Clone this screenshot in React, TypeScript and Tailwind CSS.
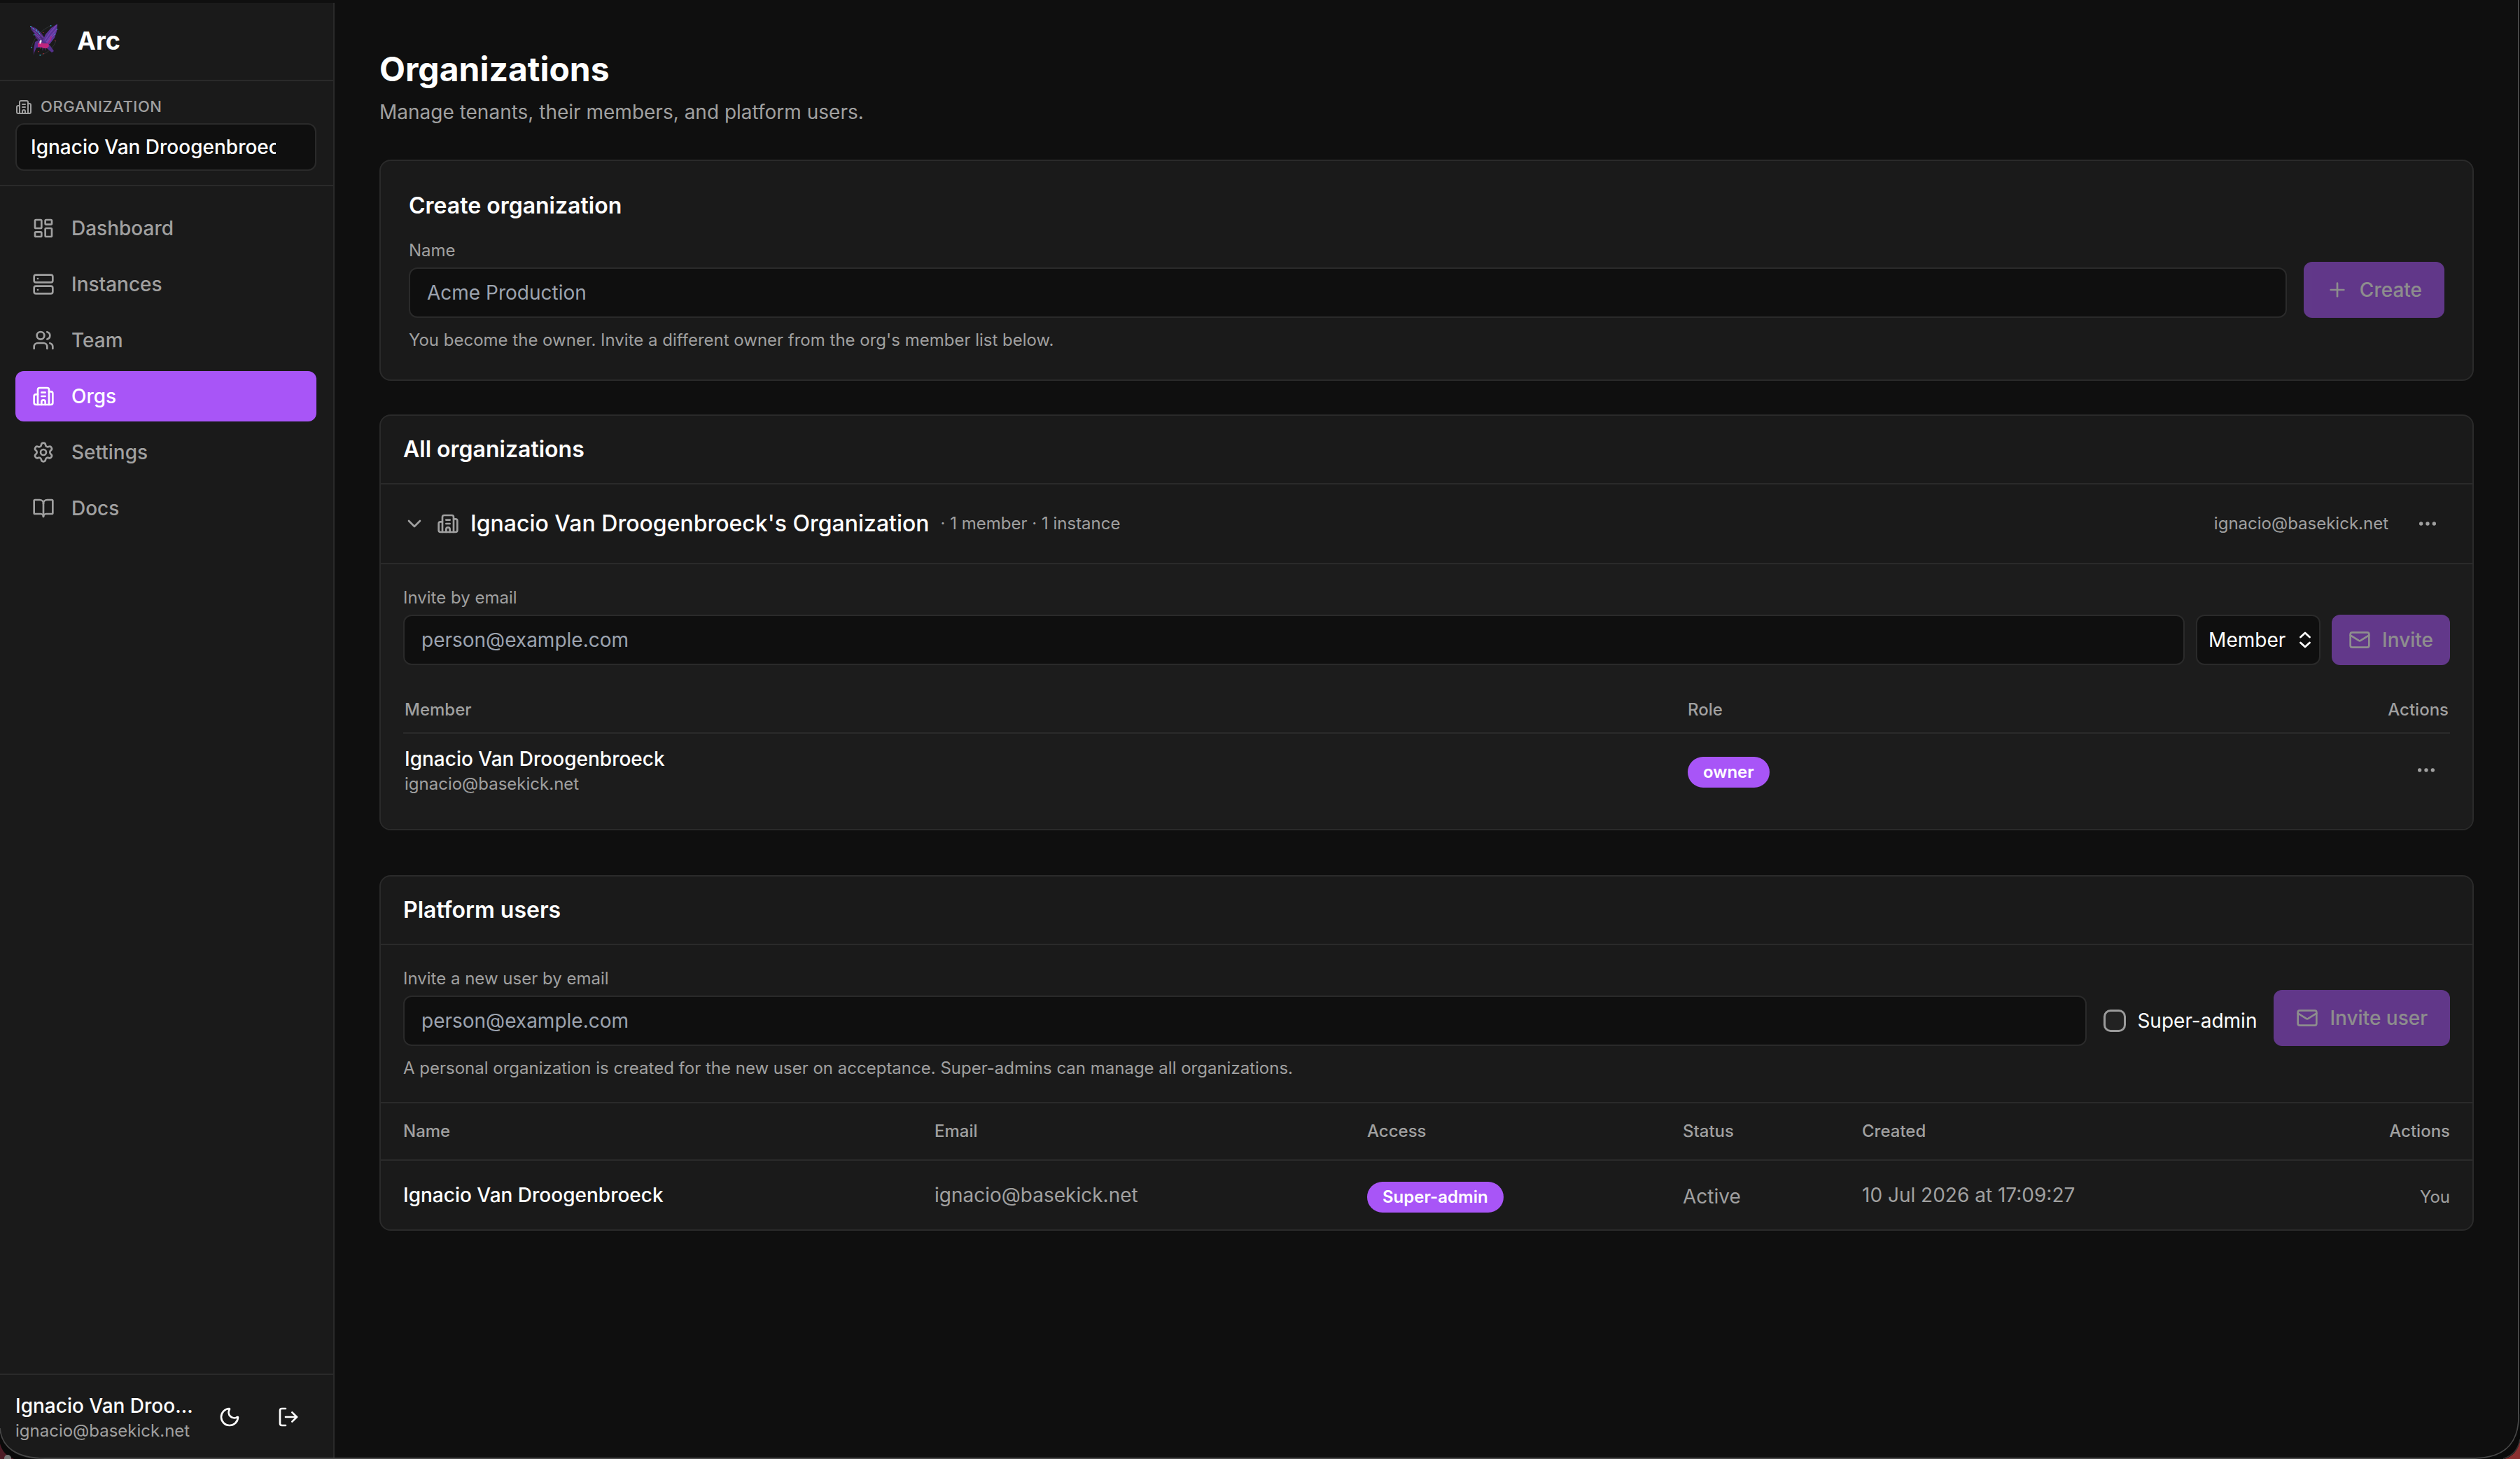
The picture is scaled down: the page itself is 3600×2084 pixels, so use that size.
import type { ReactNode } from 'react'
import {
  BookOpen,
  Building2,
  ChevronDown,
  Ellipsis,
  LayoutDashboard,
  LogOut,
  Mail,
  Moon,
  Plus,
  Server,
  Settings,
  Users,
} from 'lucide-react'

const NAV_ITEMS = [
  { label: 'Dashboard', icon: LayoutDashboard },
  { label: 'Instances', icon: Server },
  { label: 'Team', icon: Users },
  { label: 'Orgs', icon: Building2, active: true },
  { label: 'Settings', icon: Settings },
  { label: 'Docs', icon: BookOpen },
]

const USER = { name: 'Ignacio Van Droogenbroeck', email: 'ignacio@basekick.net' }

/** Hummingbird mark */
function Logo() {
  return (
    <svg viewBox="0 0 48 48" className="mb-1 size-12 shrink-0">
      <path d="M6 35C8 25 16 12 33 4M18 46c10-2 20-11 23-21" fill="none" stroke="#34383c" strokeWidth="0.8" />
      {/* wings */}
      <path d="M4 4l8 3 8 7 4 6 3 8-4 1-5-2-6-6-2-6-4-5z" fill="#4b2a78" />
      <path d="M6 6l8 6 9 9M9 11l9 9M11 16l9 8" stroke="#6d3fa3" strokeWidth="1.4" fill="none" />
      <path d="M43 1l-1 11-3 9-7 9-8 1-2-6 4-9 8-9z" fill="#5b3598" />
      <path d="M42 3l-9 10-8 12M42 9l-8 9-7 9M40 15l-8 8-5 6" stroke="#7a46b5" strokeWidth="1.2" fill="none" />
      {/* body, beak and tail */}
      <path d="M11 27l5-3 7 2 7 3 4 5 4 6-3 2-7-6-8-1-7 0-3 7-1 4 0-8z" fill="#54308a" />
      <path d="M15 28h6l2 1h7l1 4-3 3h-5l-3-2h-5z" fill="#c0267e" />
      <path d="M34 19l-1 5-3 4" stroke="#a3278a" strokeWidth="2" fill="none" />
      <path d="M22 35v4M26 36v3" stroke="#4b2a78" strokeWidth="1" fill="none" />
      <path d="M18.500 24h1.800v3.500h-1.200v2h-1.600V26h1z" fill="#fff" />
      <path d="M4 4h2v1H4zM8 7h1v2H8zM13 9h1v3h-1zM15 11h1v3h-1zM17 14h1v2h-1zM9 16h1.400v1.400H9zM33 3h1.400v1.400H33zM42 8h1v2h-1zM39 15h1v2h-1zM5.500 34h1.400v1.400H5.500zM17.500 45h1.600v1.400h-1.600z" fill="#29a9bf" />
      <path d="M22 13h1.400v1H22zM39 24.500h1.600v1.200H39zM18 35h1.600v1.200H18zM15 40h1.600v1.200H15zM22 43h1.600v1.200H22z" fill="#a52c35" />
    </svg>
  )
}

function Sidebar() {
  return (
    <aside className="flex w-[478px] shrink-0 flex-col border-r-2 border-[#2a2a2a] bg-[#1a1a1a]">
      <div className="flex h-28 shrink-0 items-center gap-[23px] border-b-2 border-[#2a2a2a] pl-[39px]">
        <Logo />
        <span className="pb-0.5 text-4xl font-bold">Arc</span>
      </div>

      {/* Organization switcher */}
      <div className="h-[150px] shrink-0 border-b-2 border-[#2a2a2a] pt-5 pr-6 pl-[22px]">
        <div className="mb-[7px] flex h-[33px] items-center gap-3 text-[22px] font-medium tracking-[0.025em] text-[#a0a0a0] uppercase">
          <Building2 className="size-6" />
          Organization
        </div>
        <div className="flex h-[68px] items-center rounded-xl border-2 border-[#2a2a2a] bg-[#0f0f0f] pr-14 pl-5">
          <div className="overflow-hidden text-[28px]/[40px] font-medium whitespace-nowrap">{USER.name}'s Organization</div>
        </div>
      </div>

      <nav className="flex flex-1 flex-col gap-2 pt-6 pr-6 pl-[22px]">
        {NAV_ITEMS.map(({ label, icon: Icon, active }) => (
          <a
            key={label}
            className={`flex h-[72px] items-center gap-6 rounded-xl px-6 text-[28px]/[40px] font-medium ${
              active ? 'bg-[#a855f7] text-white' : 'text-[#a0a0a0]'
            }`}
          >
            <Icon className="size-8" />
            {label}
          </a>
        ))}
      </nav>

      {/* Signed-in user */}
      <div className="flex h-[122px] shrink-0 items-center border-t-2 border-[#2a2a2a] pl-[22px]">
        <div className="w-[254px]">
          <div className="truncate text-[28px]/[40px] font-medium">{USER.name}</div>
          <div className="text-2xl/[32px] text-[#a0a0a0]">{USER.email}</div>
        </div>
        <Moon className="ml-9 size-8" />
        <LogOut className="ml-[52px] size-8" />
      </div>
    </aside>
  )
}

function Card({ children, className = '' }: { children: ReactNode; className?: string }) {
  return (
    <section className={`overflow-hidden rounded-2xl border-2 border-[#2a2a2a] bg-[#1a1a1a] ${className}`}>
      {children}
    </section>
  )
}

function CardHeader({ children }: { children: ReactNode }) {
  return (
    <div className="border-b-2 border-[#2a2a2a] px-8 py-6">
      <h2 className="text-[32px]/[48px] font-semibold">{children}</h2>
    </div>
  )
}

function Field({ label, placeholder, help }: { label: string; placeholder: string; help?: string }) {
  return (
    <div className="flex-1">
      <label className="mb-2 block text-2xl/[32px] text-[#a0a0a0]">{label}</label>
      <input
        type="text"
        placeholder={placeholder}
        className="block h-[72px] w-full rounded-xl border-2 border-[#2a2a2a] bg-[#0f0f0f] px-6 text-[28px]/[40px] placeholder-[#9ca3af] outline-none"
      />
      {help && <p className="mt-4 text-2xl/[32px] text-[#a0a0a0]">{help}</p>}
    </div>
  )
}

function Badge({ children }: { children: ReactNode }) {
  return (
    <span className="inline-flex h-11 items-center rounded-full bg-[#a855f7] px-[22px] text-2xl/[32px] font-semibold">
      {children}
    </span>
  )
}

function CreateCard() {
  return (
    <Card className="mt-12 p-10">
      <h2 className="mb-6 text-[32px]/[48px] font-semibold">Create organization</h2>
      <div className="flex items-start gap-6">
        <Field
          label="Name"
          placeholder="Acme Production"
          help="You become the owner. Invite a different owner from the org's member list below."
        />
        <button
          disabled
          className="mt-8 flex h-20 items-center gap-4 rounded-xl bg-[#a855f7] px-8 text-[28px]/[40px] font-medium opacity-50"
        >
          <Plus className="size-8" />
          Create
        </button>
      </div>
    </Card>
  )
}

function OrganizationsCard() {
  return (
    <Card className="mt-12">
      <CardHeader>All organizations</CardHeader>

      <div className="flex h-28 items-center gap-4 px-8 text-2xl/[32px] text-[#a0a0a0]">
        <ChevronDown className="size-8" />
        <Building2 className="size-8" />
        <span className="text-[32px]/[48px] font-medium text-white">{USER.name}'s Organization</span>
        <span>· 1 member · 1 instance</span>
        <span className="mr-2 ml-auto">{USER.email}</span>
        <div className="flex size-16 items-center justify-center">
          <Ellipsis className="size-8" />
        </div>
      </div>

      {/* Expanded organization */}
      <div className="border-t-2 border-[#2a2a2a] bg-[#1c1c1c] p-8">
        <div className="flex items-end gap-4">
          <Field label="Invite by email" placeholder="person@example.com" />
          <div className="flex h-[72px] w-[178px] items-center justify-between rounded-xl border-2 border-[#2a2a2a] bg-[#0f0f0f] pr-3 pl-4 text-[28px]/[40px]">
            Member
            <svg viewBox="0 0 16 24" className="h-6 w-4" fill="none" stroke="currentColor" strokeWidth="2.8" strokeLinecap="round" strokeLinejoin="round">
              <path d="M1.500 8L8 2l6.500 6M1.500 16L8 22l6.500-6" />
            </svg>
          </div>
          <button
            disabled
            className="flex h-[72px] items-center gap-4 rounded-xl bg-[#a855f7] px-6 text-[28px]/[40px] font-medium opacity-50"
          >
            <Mail className="size-8" />
            Invite
          </button>
        </div>

        <div className="mt-8 grid grid-cols-[1833px_1fr_auto] border-b-2 border-[#2a2a2a] px-0.5 py-4 text-2xl/[32px] font-medium text-[#a0a0a0]">
          <span>Member</span>
          <span>Role</span>
          <span>Actions</span>
        </div>
        <div className="grid h-[104px] grid-cols-[1833px_1fr_auto] items-center px-0.5">
          <div>
            <div className="text-[28px]/[40px] font-medium">{USER.name}</div>
            <div className="text-2xl/[32px] text-[#a0a0a0]">{USER.email}</div>
          </div>
          <div className="pt-1.5 leading-none">
            <Badge>owner</Badge>
          </div>
          <div className="flex size-16 items-center justify-center text-[#a0a0a0]">
            <Ellipsis className="size-8" />
          </div>
        </div>
      </div>
    </Card>
  )
}

function UsersCard() {
  return (
    <Card className="mt-16">
      <CardHeader>Platform users</CardHeader>

      <div className="flex items-start gap-6 p-8">
        <Field
          label="Invite a new user by email"
          placeholder="person@example.com"
          help="A personal organization is created for the new user on acceptance. Super-admins can manage all organizations."
        />
        <label className="mt-10 flex h-[72px] items-center gap-4 text-[28px]/[40px]">
          <span className="size-8 rounded-[10px] border-[3px] border-[#9b9b9b] bg-[#222222]" />
          Super-admin
        </label>
        <button
          disabled
          className="mt-8 flex h-20 items-center gap-4 rounded-xl bg-[#a855f7] px-8 text-[28px]/[40px] font-medium opacity-50"
        >
          <Mail className="size-8" />
          Invite user
        </button>
      </div>

      <div className="grid grid-cols-[759px_618px_451px_256px_1fr] border-y-2 border-[#2a2a2a] px-8 py-6 text-2xl/[32px] font-medium text-[#a0a0a0]">
        <span>Name</span>
        <span>Email</span>
        <span>Access</span>
        <span>Status</span>
        <div className="flex justify-between">
          <span>Created</span>
          <span>Actions</span>
        </div>
      </div>
      <div className="grid h-[98px] grid-cols-[759px_618px_451px_256px_1fr] items-center px-8 text-[28px]/[40px] text-[#a0a0a0]">
        <span className="font-medium text-white">{USER.name}</span>
        <span>{USER.email}</span>
        <div className="pt-1.5 leading-none text-white">
          <Badge>Super-admin</Badge>
        </div>
        <span className="pt-1">Active</span>
        <div className="flex items-center justify-between">
          <span>10 Jul 2026 at 17:09:27</span>
          <span className="pt-1.5 text-2xl/[32px]">You</span>
        </div>
      </div>
    </Card>
  )
}

/** Rounded window edge and the sliver of desktop behind its lower corners */
function WindowFrame() {
  return (
    <div className="pointer-events-none absolute inset-0">
      <div className="absolute top-0 right-0 bottom-16 w-[3px] border-l-2 border-[#484848] bg-black" />
      <div className="absolute right-16 bottom-0 left-16 h-0.5 bg-[#484848]" />
      <svg viewBox="0 0 64 64" className="absolute bottom-0 left-0 size-16">
        <path d="M0 20C2 45 20 62 52 64H0z" fill="#0a0a0a" />
        <path d="M0 42Q4 58 20 64H0z" fill="#4e1c26" />
        <circle cx="11" cy="63" r="5" fill="#777" />
        <path d="M0 20C2 46 22 63 64 63" fill="none" stroke="#484848" strokeWidth="1.8" />
      </svg>
      <svg viewBox="0 0 64 64" className="absolute right-0 bottom-0 size-16">
        <path d="M62 0C62 42 46 60 6 64H64V0z" fill="#0a0a0a" />
        <path d="M64 38Q60 58 42 64H64z" fill="#8a3030" />
        <path d="M64 36Q60 58 40 63.500" fill="none" stroke="#333" strokeWidth="1.500" />
        <path d="M62 0V8C60 42 42 62 0 63" fill="none" stroke="#484848" strokeWidth="1.8" />
      </svg>
    </div>
  )
}

export default function App() {
  return (
    <div className="relative flex h-[2084px] w-[3600px] overflow-hidden bg-[#0f0f0f] pt-1 font-['Inter',sans-serif] text-white antialiased">
      <Sidebar />
      <main className="flex-1 pt-[63px] pr-[66px] pl-16">
        <h1 className="text-5xl/[64px] font-bold">Organizations</h1>
        <p className="mt-[9px] text-[28px]/[40px] text-[#a0a0a0]">Manage tenants, their members, and platform users.</p>
        <CreateCard />
        <OrganizationsCard />
        <UsersCard />
      </main>
      <WindowFrame />
    </div>
  )
}
